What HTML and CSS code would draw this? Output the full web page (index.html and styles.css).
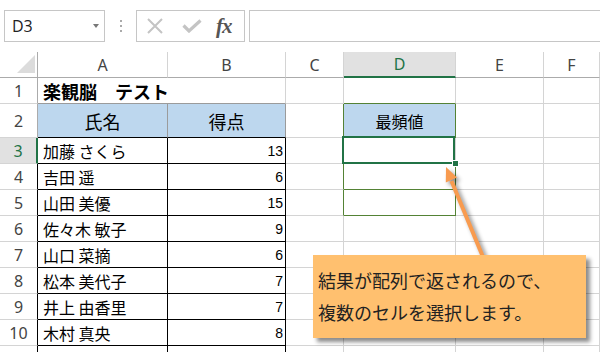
FILE: index.html
```html
<!DOCTYPE html>
<html lang="ja">
<head>
  <meta charset="UTF-8" />
  <title>最頻値 - Excel</title>
  <link rel="stylesheet" href="styles.css">
</head>
<body>
<div class="page">

  <div class="formula-bar">
    <div class="name-box"><span>D3</span><span class="caret"></span></div>
    <div class="grip"><i></i><i></i><i></i></div>
    <div class="fx-buttons">
      <svg class="ico-x" width="16" height="16" viewBox="0 0 16 16"><path d="M1 1L15 15M15 1L1 15" stroke="#c4c4c4" stroke-width="2" fill="none"/></svg>
      <svg class="ico-ok" width="20" height="14" viewBox="0 0 20 14"><path d="M1.5 6.5L7 12L18.5 1.5" stroke="#c4c4c4" stroke-width="3.2" fill="none"/></svg>
      <span class="fx">fx</span>
    </div>
    <div class="formula-input"></div>
  </div>

  <div class="sheet">
    <!-- column headers -->
    <div class="corner"></div>
    <div class="ch">A</div>
    <div class="ch">B</div>
    <div class="ch">C</div>
    <div class="ch on">D</div>
    <div class="ch">E</div>
    <div class="ch">F</div>

    <!-- 1 -->
    <div class="rh">1</div>
    <div class="title">楽観脳　テスト</div>
    <div></div>
    <div class="olive-b"></div>
    <div></div>
    <div></div>

    <!-- 2 -->
    <div class="rh">2</div>
    <div class="hd">氏名</div>
    <div class="hd">得点</div>
    <div class="olive-r"></div>
    <div class="hd-d">最頻値</div>
    <div></div>
    <div></div>

    <!-- 3 -->
    <div class="rh on">3</div>
    <div class="nm">加藤 さくら</div>
    <div class="sc">13</div>
    <div></div>
    <div class="sel"></div>
    <div></div>
    <div></div>

    <!-- 4 -->
    <div class="rh t">4</div>
    <div class="nm">吉田 遥</div>
    <div class="sc">6</div>
    <div class="olive-r"></div>
    <div class="box"></div>
    <div></div>
    <div></div>

    <!-- 5 -->
    <div class="rh t">5</div>
    <div class="nm">山田 美優</div>
    <div class="sc">15</div>
    <div class="olive-r"></div>
    <div class="box"></div>
    <div></div>
    <div></div>

    <!-- 6 -->
    <div class="rh t">6</div>
    <div class="nm">佐々木 敏子</div>
    <div class="sc">9</div>
    <div></div>
    <div></div>
    <div></div>
    <div></div>

    <!-- 7 -->
    <div class="rh t">7</div>
    <div class="nm">山口 菜摘</div>
    <div class="sc">6</div>
    <div></div>
    <div></div>
    <div></div>
    <div></div>

    <!-- 8 -->
    <div class="rh t">8</div>
    <div class="nm">松本 美代子</div>
    <div class="sc">7</div>
    <div></div>
    <div></div>
    <div></div>
    <div></div>

    <!-- 9 -->
    <div class="rh t">9</div>
    <div class="nm">井上 由香里</div>
    <div class="sc">7</div>
    <div></div>
    <div></div>
    <div></div>
    <div></div>

    <!-- 10 -->
    <div class="rh t">10</div>
    <div class="nm">木村 真央</div>
    <div class="sc">8</div>
    <div></div>
    <div></div>
    <div></div>
    <div></div>

    <!-- 11 -->
    <div class="rh t">11</div>
    <div class="nm">高橋 結衣</div>
    <div class="sc">9</div>
    <div></div>
    <div></div>
    <div></div>
    <div></div>
  </div>

  <svg class="arrow" width="600" height="352" viewBox="0 0 600 352">
    <path d="M483 257L451.5 181" stroke="#f89b4f" stroke-width="4" fill="none"/>
    <polygon points="446,167 457,177.6 445.8,182.4" fill="#f89b4f"/>
  </svg>

  <div class="callout">結果が配列で返されるので、<br>複数のセルを選択します。</div>

</div>
</body>
</html>
```

FILE: styles.css
```css
body { margin: 0; background: #fff; font-family: "Noto Sans CJK JP", sans-serif; color: #000; }
.page { position: relative; width: 600px; height: 352px; overflow: hidden; }

/* formula bar */
.formula-bar { display: flex; height: 32px; padding-top: 10px; margin-bottom: 10px; }
.name-box { margin-left: 4px; width: 101px; box-sizing: border-box; border: 1px solid #c6c6c6; display: flex; align-items: center; justify-content: space-between; padding: 0 5px 0 7px; font: 16px "Open Sans", sans-serif; color: #222; }
.caret { width: 0; height: 0; border-left: 3.5px solid transparent; border-right: 3.5px solid transparent; border-top: 4px solid #777; }
.grip { width: 31px; display: flex; flex-direction: column; align-items: center; justify-content: center; gap: 3px; }
.grip i { width: 2px; height: 2px; background: #aaa; }
.fx-buttons { width: 109px; box-sizing: border-box; border: 1px solid #c6c6c6; display: flex; align-items: center; padding-left: 10px; }
.ico-ok { margin-left: 19px; }
.fx { margin-left: 14px; font: italic bold 21px "Liberation Serif", serif; color: #555; letter-spacing: -1px; }
.formula-input { flex: 1; margin-left: 4px; border: 1px solid #c6c6c6; border-right: none; }

/* sheet grid */
.sheet { display: grid; grid-template-columns: 38px 130px 118px 58px 112px 88px 56px; grid-template-rows: 26px 26px 34px repeat(9, 26px); }
.sheet > div { box-sizing: border-box; border-right: 1px solid #d4d4d4; border-bottom: 1px solid #d4d4d4; }

.corner { position: relative; border-bottom-color: #ababab !important; border-right-color: #ababab !important; }
.corner::after { content: ""; position: absolute; right: 2px; bottom: 4px; border-left: 18px solid transparent; border-bottom: 18px solid #dcdcdc; }

.ch { display: flex; align-items: center; justify-content: center; font: 16px "Noto Sans", sans-serif; color: #444; border-bottom-color: #ababab !important; }
.ch.on { background: #e1e1e1; color: #217346; border-bottom: 2px solid #217346 !important; }

.rh { display: flex; align-items: center; justify-content: center; font: 16px "Noto Sans", sans-serif; color: #444; border-right-color: #ababab !important; }
.rh.t { border-right-color: #000 !important; }
.rh.on { background: #e1e1e1; color: #217346; border-right: 2px solid #217346 !important; }

.title { grid-column: span 2; display: flex; align-items: center; padding-left: 5px; font-size: 18px; font-weight: bold; white-space: nowrap; border-bottom-color: #9b9b9b !important; }

.hd { display: flex; align-items: center; justify-content: center; background: #bdd7ee; font-size: 18px; border-right-color: #9b9b9b !important; border-bottom-color: #000 !important; }
.hd-d { display: flex; align-items: center; justify-content: center; background: #bdd7ee; font-size: 16px; border-right-color: #548235 !important; border-bottom-color: #548235 !important; }

.nm { display: flex; align-items: center; padding-left: 5px; font-size: 16px; white-space: nowrap; border-right-color: #000 !important; border-bottom-color: #000 !important; }
.sc { display: flex; align-items: center; justify-content: flex-end; padding-right: 2px; font: 14px "Liberation Sans", sans-serif; border-right-color: #000 !important; border-bottom-color: #000 !important; }

.olive-b { border-bottom-color: #548235 !important; }
.olive-r { border-right-color: #548235 !important; }
.box { border-right-color: #548235 !important; border-bottom-color: #548235 !important; }

/* active cell */
.sel { position: relative; }
.sel::after { content: ""; position: absolute; left: -2px; top: -2px; right: 0; bottom: -1px; border: 2px solid #217346; }
.sel::before { content: ""; position: absolute; right: -3px; bottom: -3px; width: 5px; height: 5px; background: #217346; box-shadow: 0 0 0 1px #fff; z-index: 1; }

/* callout */
.arrow { position: absolute; left: 0; top: 0; pointer-events: none; filter: drop-shadow(3px 3px 2px rgba(0,0,0,0.45)); }
.callout { position: absolute; left: 313px; top: 255px; width: 273px; height: 83px; box-sizing: border-box; padding: 9px 0 0 5px; background: #ffc06f; font-size: 18px; line-height: 32px; color: #222; white-space: nowrap; box-shadow: 4px 4px 4px rgba(0,0,0,0.45); }
```
